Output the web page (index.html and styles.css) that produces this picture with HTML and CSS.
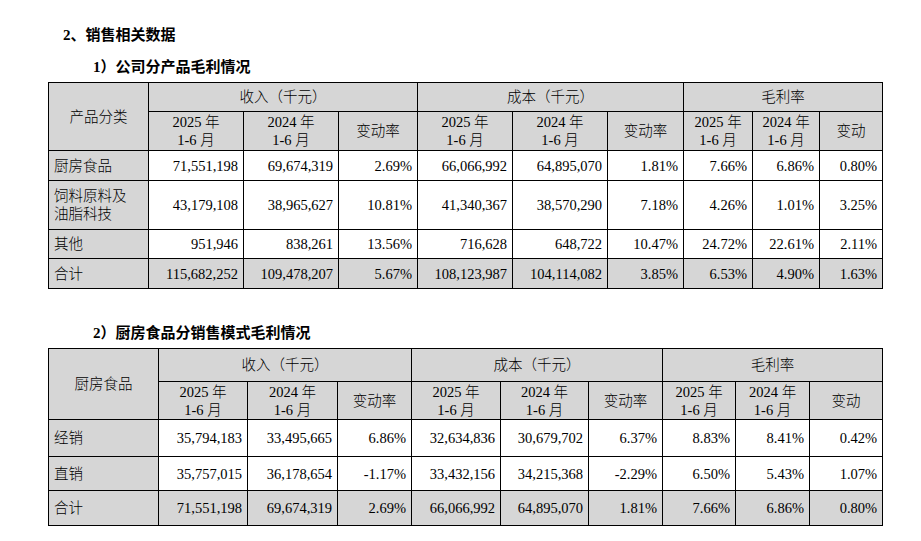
FILE: index.html
```html
<!DOCTYPE html>
<html lang="zh">
<head>
<meta charset="utf-8">
<link rel="stylesheet" href="styles.css">
</head>
<body>
<div class="page">
  <h2 class="h-section">2、销售相关数据</h2>
  <h3 class="h-sub">1）公司分产品毛利情况</h3>
  <table class="tbl t1">
    <colgroup>
      <col style="width:100px"><col style="width:95px"><col style="width:95px"><col style="width:79px">
      <col style="width:95px"><col style="width:95px"><col style="width:76px">
      <col style="width:69px"><col style="width:67px"><col style="width:63px">
    </colgroup>
    <tr class="hr1">
      <th rowspan="2">产品分类</th>
      <th colspan="3">收入（千元）</th>
      <th colspan="3">成本（千元）</th>
      <th colspan="3">毛利率</th>
    </tr>
    <tr class="hr2">
      <th>2025 年<br>1-6 月</th><th>2024 年<br>1-6 月</th><th>变动率</th>
      <th>2025 年<br>1-6 月</th><th>2024 年<br>1-6 月</th><th>变动率</th>
      <th>2025 年<br>1-6 月</th><th>2024 年<br>1-6 月</th><th>变动</th>
    </tr>
    <tr class="r30">
      <td class="lab">厨房食品</td><td>71,551,198</td><td>69,674,319</td><td>2.69%</td>
      <td>66,066,992</td><td>64,895,070</td><td>1.81%</td><td>7.66%</td><td>6.86%</td><td>0.80%</td>
    </tr>
    <tr class="r49">
      <td class="lab">饲料原料及<br>油脂科技</td><td>43,179,108</td><td>38,965,627</td><td>10.81%</td>
      <td>41,340,367</td><td>38,570,290</td><td>7.18%</td><td>4.26%</td><td>1.01%</td><td>3.25%</td>
    </tr>
    <tr class="r29">
      <td class="lab">其他</td><td>951,946</td><td>838,261</td><td>13.56%</td>
      <td>716,628</td><td>648,722</td><td>10.47%</td><td>24.72%</td><td>22.61%</td><td>2.11%</td>
    </tr>
    <tr class="r30 total">
      <td class="lab">合计</td><td>115,682,252</td><td>109,478,207</td><td>5.67%</td>
      <td>108,123,987</td><td>104,114,082</td><td>3.85%</td><td>6.53%</td><td>4.90%</td><td>1.63%</td>
    </tr>
  </table>

  <h3 class="h-sub h-sub2">2）厨房食品分销售模式毛利情况</h3>
  <table class="tbl t2">
    <colgroup>
      <col style="width:110px"><col style="width:89px"><col style="width:90px"><col style="width:74px">
      <col style="width:89px"><col style="width:88px"><col style="width:74px">
      <col style="width:73px"><col style="width:74px"><col style="width:73px">
    </colgroup>
    <tr class="hr1b">
      <th rowspan="2">厨房食品</th>
      <th colspan="3">收入（千元）</th>
      <th colspan="3">成本（千元）</th>
      <th colspan="3">毛利率</th>
    </tr>
    <tr class="hr2">
      <th>2025 年<br>1-6 月</th><th>2024 年<br>1-6 月</th><th>变动率</th>
      <th>2025 年<br>1-6 月</th><th>2024 年<br>1-6 月</th><th>变动率</th>
      <th>2025 年<br>1-6 月</th><th>2024 年<br>1-6 月</th><th>变动</th>
    </tr>
    <tr class="r37">
      <td class="lab">经销</td><td>35,794,183</td><td>33,495,665</td><td>6.86%</td>
      <td>32,634,836</td><td>30,679,702</td><td>6.37%</td><td>8.83%</td><td>8.41%</td><td>0.42%</td>
    </tr>
    <tr class="r34">
      <td class="lab">直销</td><td>35,757,015</td><td>36,178,654</td><td>-1.17%</td>
      <td>33,432,156</td><td>34,215,368</td><td>-2.29%</td><td>6.50%</td><td>5.43%</td><td>1.07%</td>
    </tr>
    <tr class="r35 total">
      <td class="lab">合计</td><td>71,551,198</td><td>69,674,319</td><td>2.69%</td>
      <td>66,066,992</td><td>64,895,070</td><td>1.81%</td><td>7.66%</td><td>6.86%</td><td>0.80%</td>
    </tr>
  </table>
</div>
</body>
</html>
```

FILE: styles.css
```css
html, body {
  margin: 0;
  padding: 0;
  background: #ffffff;
}
body {
  font-family: "Liberation Serif", "Noto Sans CJK SC", serif;
  color: #000;
}
.page {
  padding: 26px 0 0 48px;
}
.h-section {
  margin: 0 0 0 15px;
  font-size: 15px;
  line-height: 18px;
  font-weight: bold;
  font-family: "Liberation Serif", "Noto Sans CJK SC", sans-serif;
}
.h-sub {
  margin: 14px 0 6px 45px;
  font-size: 15px;
  line-height: 18px;
  font-weight: bold;
  font-family: "Liberation Serif", "Noto Sans CJK SC", sans-serif;
}
.h-sub2 {
  margin-top: 35px;
  margin-bottom: 6px;
}
.tbl {
  border-collapse: collapse;
  table-layout: fixed;
  width: 834px;
  font-size: 14.5px;
}
.tbl th, .tbl td {
  border: 1px solid #000;
  padding: 0 5px;
  overflow: hidden;
  white-space: nowrap;
}
.tbl th {
  background: #d6d6d6;
  font-weight: 300;
  text-align: center;
  line-height: 18px;
}
.tbl td {
  text-align: right;
  background: #fff;
  line-height: 18px;
}
.tbl td.lab {
  text-align: left;
  background: #d6d6d6;
  font-weight: 300;
}
.tbl tr.total td {
  background: #d6d6d6;
}
.t1 .hr1 th { height: 28px; }
.t1 .hr2 th { height: 38px; }
.t2 .hr1b th { height: 32px; }
.t2 .hr2 th { height: 37px; }
.r30 td { height: 29px; }
.r49 td { height: 48px; }
.r29 td { height: 28px; }
.r37 td { height: 36px; }
.r34 td { height: 33px; }
.r35 td { height: 34px; }
```
